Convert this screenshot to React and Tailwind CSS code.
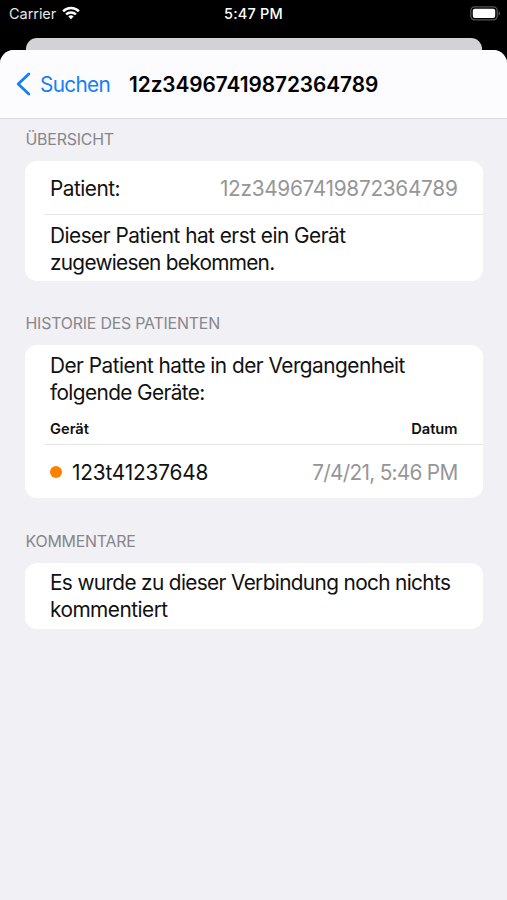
function StatusBar() {
  return (
    <div className="grid h-[38px] grid-cols-3 items-start pt-[5px] text-[14.5px] leading-[18px] text-white">
      <div className="flex items-center gap-[6px] pl-[9px]">
        <span className="tracking-[-0.05px] text-[#e6e6e6]">Carrier</span>
        <svg className="-mt-[3px] h-[14px] w-[18px]" viewBox="0 0 19 14" fill="none" stroke="white" strokeWidth="2.6">
          <path d="M1.2 5.2a11.8 11.8 0 0 1 16.6 0" />
          <path d="M4.3 8.5a7.4 7.4 0 0 1 10.4 0" />
          <path d="M9.5 13.6l-2.8-2.9a4 4 0 0 1 5.6 0z" fill="white" stroke="none" />
        </svg>
      </div>
      <div className="text-center font-medium tracking-[0.2px]">5:47 PM</div>
      <div className="flex justify-end pr-[6px] pt-[1px]">
        <svg className="h-[15px] w-[31px]" viewBox="0 0 31 15">
          <rect x="0.8" y="0.8" width="26.4" height="13" rx="3.8" fill="black" stroke="#555557" strokeWidth="1.3" />
          <rect x="2.8" y="2.7" width="22.4" height="9.2" rx="2" fill="white" />
          <path d="M28.7 5.2c1.5.5 1.5 3.8 0 4.3z" fill="#6b6b6d" />
        </svg>
      </div>
    </div>
  )
}

function NavBar() {
  return (
    <div className="flex h-[69px] items-center border-b border-[#dcdce0] bg-[#fcfcfe] pl-[16px]">
      <svg className="h-[24px] w-[15px]" viewBox="0 0 15 24" fill="none" stroke="#1580f8" strokeWidth="2.8" strokeLinecap="round" strokeLinejoin="round">
        <path d="M12.8 2L2.2 12l10.6 10" />
      </svg>
      <span className="ml-[9px] w-[89px] whitespace-nowrap pt-[2px] text-[20.8px] tracking-[-0.7px] text-[#1580f8]">Suchen</span>
      <h1 className="whitespace-nowrap pt-[2px] text-[20.8px] font-semibold tracking-[-0.05px] text-black">12z34967419872364789</h1>
    </div>
  )
}

function Section({ title, children }) {
  return (
    <section className="mb-[33px]">
      <h2 className="mb-[11px] pl-[0.5px] text-[15.9px] leading-[20px] tracking-[-0.2px] text-[#86868b]">{title}</h2>
      <div className="overflow-hidden rounded-[12px] bg-white">{children}</div>
    </section>
  )
}

function App() {
  return (
    <div className="flex h-[900px] w-[507px] flex-col overflow-hidden bg-black font-['Inter',sans-serif] text-[#111111]">
      <StatusBar />
      <div className="mx-[25.5px] h-[12px] shrink-0 rounded-t-[11px] bg-[#d3d3d5]" />
      <main className="flex-1 overflow-hidden rounded-t-[14px] bg-[#f1f0f5]">
        <NavBar />
        <div className="pl-[25px] pr-[24.5px] pt-[11px] text-[20.8px] leading-[27px] tracking-[-0.51px]">
          <Section title="ÜBERSICHT">
            <div className="flex h-[53px] items-center justify-between px-[25px] pt-[2px]">
              <span>Patient:</span>
              <span className="tracking-[-0.29px] text-[#969698]">12z34967419872364789</span>
            </div>
            <div className="ml-[19px] border-t border-[#e6e6e8]" />
            <p className="h-[66px] px-[25px] pt-[7px]">
              Dieser Patient hat erst ein Gerät
              <br />
              <span className="tracking-[-0.72px]">zugewiesen bekommen.</span>
            </p>
          </Section>
          <Section title="HISTORIE DES PATIENTEN">
            <p className="px-[25px] pt-[7px]">
              Der Patient hatte in der Vergangenheit
              <br />
              <span className="tracking-[-0.6px]">folgende Geräte:</span>
            </p>
            <div className="flex h-[38px] items-center justify-between px-[25px] pt-[7px] text-[14.7px] font-semibold leading-[20px] tracking-[-0.02px]">
              <span>Gerät</span>
              <span>Datum</span>
            </div>
            <div className="ml-[19px] border-t border-[#e6e6e8]" />
            <div className="flex h-[53px] items-center justify-between px-[25px] pt-px">
              <div className="flex items-center gap-[10px]">
                <span className="size-[12px] rounded-full bg-[#ff8000]" />
                <span className="pt-px tracking-[-0.17px]">123t41237648</span>
              </div>
              <span className="pt-px tracking-[-0.72px] text-[#969698]">7/4/21, 5:46 PM</span>
            </div>
          </Section>
          <div className="pt-[0.5px]">
            <Section title="KOMMENTARE">
              <p className="h-[66px] px-[25px] pt-[6px]">
                <span className="tracking-[-0.64px]">Es wurde zu dieser Verbindung noch nichts</span>
                <br />
                kommentiert
              </p>
            </Section>
          </div>
        </div>
      </main>
    </div>
  )
}

export default App
